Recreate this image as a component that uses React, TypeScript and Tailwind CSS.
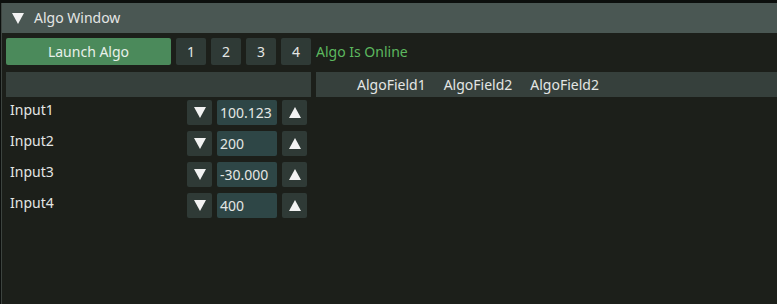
import React from "react";

const font = { fontFamily: '"Noto Sans", "Open Sans", sans-serif' };

function Tri({ down, size = 12 }: { down?: boolean; size?: number }) {
  return (
    <svg width={size} height={size - 1} viewBox="0 0 12 11" className="block">
      {down ? <polygon points="0,0 12,0 6,11" fill="#f2f2f2" /> : <polygon points="0,11 12,11 6,0" fill="#f2f2f2" />}
    </svg>
  );
}

const inputs = [
  { label: "Input1", value: "100.123" },
  { label: "Input2", value: "200" },
  { label: "Input3", value: "-30.000" },
  { label: "Input4", value: "400" },
];

export default function App() {
  return (
    <div className="w-[777px] h-[304px] bg-[#0c0f0d] pt-[3px] overflow-hidden text-[14px] text-[#e4e6e4]" style={font}>
      <div className="ml-px h-[301px] flex flex-col border-l border-[#3d4440]">
        {/* title bar */}
        <div className="h-[30px] bg-[#4a5753] flex items-center pl-[10px] gap-[10px]">
          <Tri down size={12} />
          <span className="leading-none">Algo Window</span>
        </div>

        <div className="flex-1 bg-[#1c1f1a] pl-[4px] pt-[5px]">
          {/* toolbar */}
          <div className="h-[27px] flex items-center gap-[5px]">
            <button className="w-[165px] h-full bg-[#4b8a5b] rounded-[2px] text-[#e8f0ea]">Launch Algo</button>
            {["1", "2", "3", "4"].map((n) => (
              <button key={n} className="w-[30px] h-full bg-[#2f3a36] rounded-[2px]">
                {n}
              </button>
            ))}
            <span className="text-[#5cb85f]">Algo Is Online</span>
          </div>

          {/* table header */}
          <div className="mt-[7px] h-[25px] flex gap-[5px]">
            <div className="w-[305px] bg-[#36403c]" />
            <div className="flex-1 bg-[#36403c] flex items-center pl-[41px] gap-[18px]">
              <span>AlgoField1</span>
              <span>AlgoField2</span>
              <span>AlgoField2</span>
            </div>
          </div>

          {/* inputs */}
          <div className="mt-[3px] w-[305px] flex flex-col gap-[6px]">
            {inputs.map((r) => (
              <div key={r.label} className="h-[25px] flex">
                <span className="w-[181px] pl-[4px] leading-[20px]">{r.label}</span>
                <div className="flex gap-[5px]">
                  <button className="w-[25px] h-[25px] bg-[#2f3a36] rounded-[2px] flex items-center justify-center">
                    <Tri down />
                  </button>
                  <div className="w-[60px] h-[25px] bg-[#2e4646] rounded-[2px] pl-[3px] flex items-center">{r.value}</div>
                  <button className="w-[25px] h-[25px] bg-[#2f3a36] rounded-[2px] flex items-center justify-center">
                    <Tri />
                  </button>
                </div>
              </div>
            ))}
          </div>
        </div>
      </div>
    </div>
  );
}
